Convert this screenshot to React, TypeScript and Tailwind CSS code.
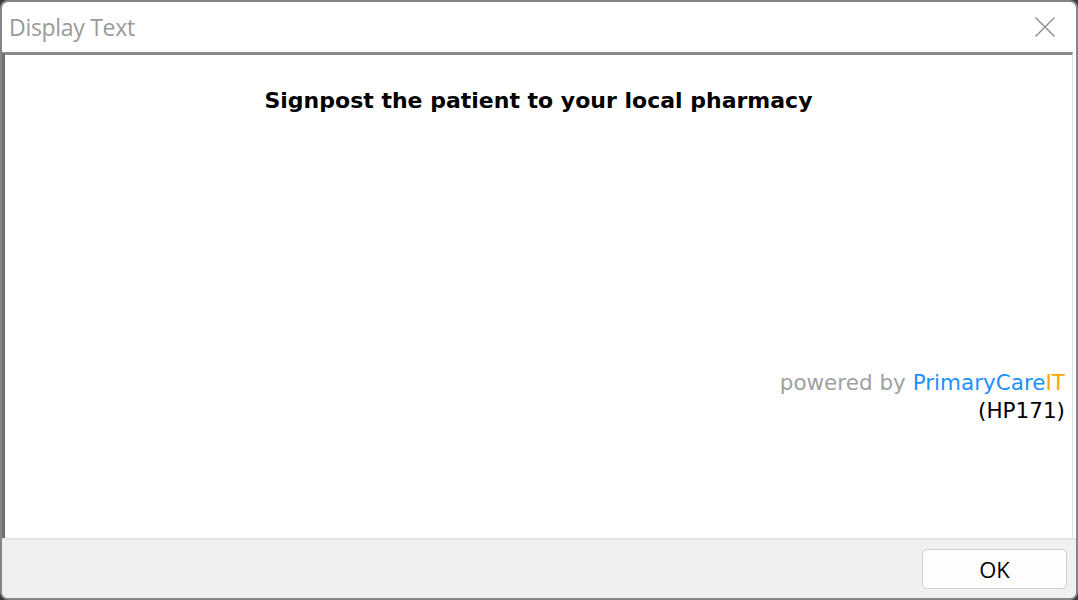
export default function App() {
  return (
    <div className="w-[1078px] h-[600px] bg-[#3a3a3a]">
      <div className="w-full h-full rounded-[8px] border-2 border-[#858585] bg-white flex flex-col overflow-hidden">
        {/* Title bar */}
        <div className="h-[50px] flex items-center justify-between pl-[7px] pr-[20px] shrink-0">
          <span className="text-[23px] text-[#9a9a9a] font-['Open_Sans',sans-serif] tracking-[-0.3px] pt-[1px]">Display Text</span>
          <svg width="22" height="22" viewBox="0 0 22 22">
            <path d="M1.5 1.5 L20.5 20.5 M20.5 1.5 L1.5 20.5" stroke="#8a8a8a" strokeWidth="1.3" fill="none" />
          </svg>
        </div>
        {/* Content */}
        <div className="flex-1 flex flex-col border-t-[3px] border-l-[3px] border-t-[#8a8a8a] border-l-[#6f6f6f] border-r border-r-[#e3e3e3] mr-[3px] bg-white">
          <div className="pt-[31px] text-center font-['DejaVu_Sans',sans-serif] font-bold text-[22px] leading-[30px] text-black">
            Signpost the patient to your local pharmacy
          </div>
          <div className="flex-1" />
          <div className="flex flex-col items-end pr-[7px] pb-[113px] font-['DejaVu_Sans',sans-serif] text-[21.5px] leading-[28px]">
            <div>
              <span className="text-[#a0a0a0]">powered by </span>
              <span className="text-[#1e90ff]">PrimaryCare</span>
              <span className="text-[#ffa500]">IT</span>
            </div>
            <div className="text-black">(HP171)</div>
          </div>
        </div>
        {/* Footer */}
        <div className="h-[60px] shrink-0 bg-[#f0f0f0] border-t-2 border-t-[#e3e3e3] flex items-center justify-end pr-[9px]">
          <button className="w-[145px] h-[40px] rounded-[5px] border border-[#d0d0d0] bg-[#fdfdfd] text-[22px] text-black font-['Open_Sans',sans-serif] flex items-center justify-center">
            OK
          </button>
        </div>
      </div>
    </div>
  )
}
